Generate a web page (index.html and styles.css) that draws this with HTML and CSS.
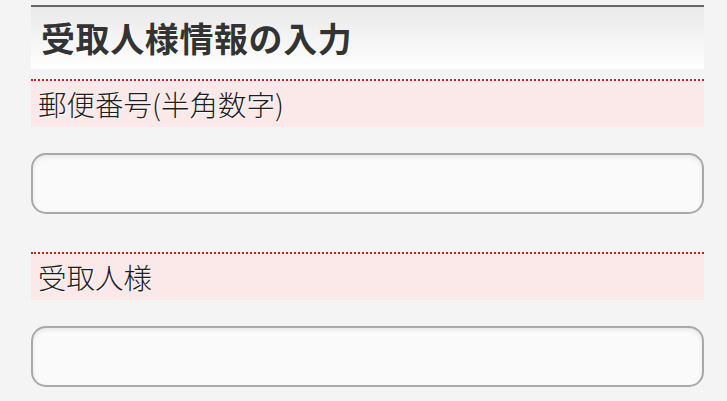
FILE: index.html
```html
<!DOCTYPE html>
<html lang="ja">
<head>
<meta charset="utf-8">
<link rel="stylesheet" href="styles.css">
</head>
<body>
<div class="page">
  <h2 class="title">受取人様情報の入力</h2>
  <div class="field first">
    <div class="label">郵便番号(半角数字)</div>
    <input class="text" type="text">
  </div>
  <div class="field">
    <div class="label">受取人様</div>
    <input class="text" type="text">
  </div>
</div>
</body>
</html>
```
FILE: styles.css
```css
html, body {
  margin: 0;
  padding: 0;
  background: #f4f4f4;
}
.page {
  padding: 5px 23px 0 31px;
  font-family: "Noto Sans CJK JP", "Liberation Sans", sans-serif;
  color: #333;
}
.title {
  margin: 0;
  height: 62px;
  border-top: 2px solid #666;
  background: linear-gradient(to bottom, #e9e9e9 0%, #f6f6f6 60%, #ffffff 100%);
  padding-left: 10px;
  font-size: 34px;
  font-weight: bold;
  line-height: 62px;
  color: #333;
  text-shadow: 1px 1px 0 #fff;
  letter-spacing: 0.6px;
}
.field {
  display: flex;
  flex-direction: column;
  padding-top: 38px;
}
.field.first {
  padding-top: 10px;
}
.label {
  height: 46px;
  border-top: 2px dotted #c4241c;
  background: #fbe8e8;
  padding-left: 7px;
  font-size: 28.5px;
  font-weight: 300;
  line-height: 46px;
  color: #1e1e1e;
  text-shadow: 1px 1px 0 #fff;
}
.text {
  margin: 26px 0 0 0;
  box-sizing: border-box;
  height: 61px;
  width: 100%;
  border: 2px solid #a9a9a9;
  border-radius: 15px;
  background: #fafafa;
  box-shadow: inset 0 2px 4px rgba(0,0,0,0.08);
  outline: none;
}
```
